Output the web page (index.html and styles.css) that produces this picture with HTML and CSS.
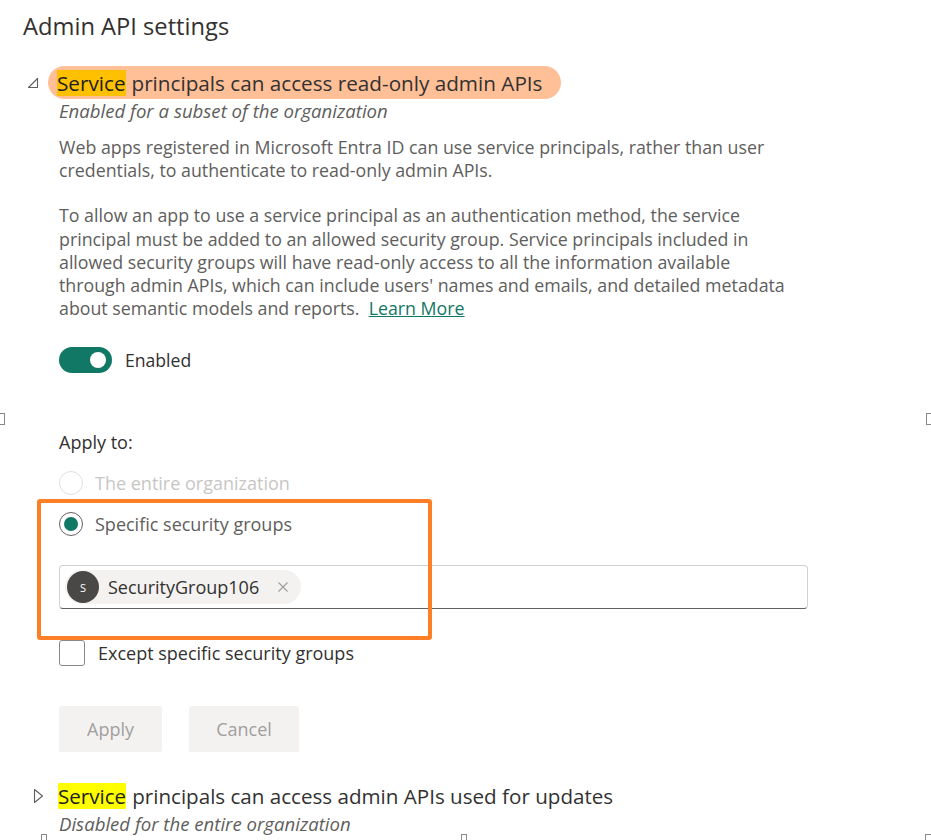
FILE: index.html
```html
<!DOCTYPE html>
<html lang="en">
<head>
<meta charset="utf-8">
<title>Admin API settings</title>
<link rel="stylesheet" href="styles.css">
</head>
<body>
<div class="page">
  <h1 class="title">Admin API settings</h1>

  <section class="setting">
    <div class="setting-head">
      <svg class="caret" width="12" height="12" viewBox="0 0 12 12"><path d="M10.5 1.5 L10.5 10.5 L1.5 10.5 Z" fill="none" stroke="#605e5c" stroke-width="1.1" stroke-linejoin="round"/></svg>
      <span class="pill"><mark class="hl hl-amber">Service</mark> principals can access read-only admin APIs</span>
    </div>
    <div class="setting-body">
      <p class="status">Enabled for a subset of the organization</p>
      <p class="desc desc-first">Web apps registered in Microsoft Entra ID can use service principals, rather than user credentials, to authenticate to read-only admin APIs.</p>
      <p class="desc desc-second">To allow an app to use a service principal as an authentication method, the service principal must be added to an allowed security group. Service principals included in allowed security groups will have read-only access to all the information available through admin APIs, which can include users' names and emails, and detailed metadata about semantic models and reports.&nbsp; <a class="link" href="#">Learn More</a></p>

      <div class="toggle-row">
        <span class="toggle"><span class="knob"></span></span>
        <span class="toggle-label">Enabled</span>
      </div>

      <div class="apply-label">Apply to:</div>

      <div class="options">
        <div class="radio-row radio-disabled">
          <span class="radio"></span>
          <span>The entire organization</span>
        </div>
        <div class="radio-row radio-checked">
          <span class="radio"><span class="dot"></span></span>
          <span>Specific security groups</span>
        </div>
        <div class="picker">
          <span class="chip">
            <span class="avatar">S</span>
            <span class="chip-text">SecurityGroup106</span>
            <svg class="chip-x" width="12" height="12" viewBox="0 0 12 12"><path d="M1.5 1.5 L10.5 10.5 M10.5 1.5 L1.5 10.5" stroke="#a19f9d" stroke-width="1.2"/></svg>
          </span>
        </div>
        <div class="annotation"></div>
      </div>

      <div class="check-row">
        <span class="checkbox"></span>
        <span>Except specific security groups</span>
      </div>

      <div class="buttons">
        <button class="btn" disabled>Apply</button>
        <button class="btn" disabled>Cancel</button>
      </div>
    </div>
  </section>

  <section class="setting setting-collapsed">
    <div class="setting-head">
      <svg class="caret caret-right" width="11" height="16" viewBox="0 0 11 16"><path d="M1.5 1.5 L9.5 8 L1.5 14.5 Z" fill="none" stroke="#605e5c" stroke-width="1.1" stroke-linejoin="round"/></svg>
      <span class="head-text"><mark class="hl hl-yellow">Service</mark> principals can access admin APIs used for updates</span>
    </div>
    <div class="setting-body">
      <p class="status">Disabled for the entire organization</p>
    </div>
  </section>

  <span class="handle handle-left"></span>
  <span class="handle handle-right"></span>
  <span class="handle handle-b1"></span>
  <span class="handle handle-b2"></span>
  <span class="handle handle-b3"></span>
</div>
</body>
</html>
```

FILE: styles.css
```css
* { box-sizing: border-box; }

html, body {
  margin: 0;
  padding: 0;
  background: #ffffff;
}

body {
  font-family: "Open Sans", "Noto Sans", sans-serif;
  color: #323130;
  font-size: 17.4px;
}

.page {
  position: relative;
  width: 931px;
  height: 840px;
  overflow: hidden;
  padding: 10px 0 0 23px;
}

.title {
  margin: 0;
  font-size: 23.7px;
  font-weight: 400;
  line-height: 32px;
  color: #323130;
}

.setting {
  margin-top: 24px;
}

.setting-head {
  display: flex;
  align-items: center;
  height: 33px;
}

.caret {
  flex: none;
  margin-left: 4px;
  margin-right: 9px;
}

.pill {
  display: inline-flex;
  align-items: center;
  height: 33px;
  padding: 0 19px 0 9px;
  border-radius: 17px;
  background: #ffbf97;
  font-size: 20.7px;
  color: #323130;
  white-space: nowrap;
}

.head-text {
  display: inline-flex;
  align-items: center;
  font-size: 20.6px;
  color: #323130;
  white-space: nowrap;
}

.hl {
  color: #201f1e;
  line-height: 26px;
  padding: 0;
  margin-right: 6px;
}

.hl-amber { background: #ffc000; }
.hl-yellow { background: #ffff00; }

.setting-body {
  padding-left: 36px;
}

.status {
  margin: 0;
  font-style: italic;
  font-size: 18.6px;
  line-height: 23px;
  color: #605e5c;
}

.desc {
  margin: 0;
  width: 733px;
  font-size: 17.8px;
  line-height: 23.2px;
  color: #605e5c;
}

.desc-first { margin-top: 14px; }
.desc-second { margin-top: 22px; }

.link {
  color: #117865;
  text-decoration: underline;
}

.toggle-row {
  display: flex;
  align-items: center;
  gap: 13px;
  margin-top: 27px;
  height: 26px;
}

.toggle {
  position: relative;
  width: 53px;
  height: 26px;
  border-radius: 13px;
  background: #117865;
}

.knob {
  position: absolute;
  right: 6px;
  top: 5px;
  width: 16px;
  height: 16px;
  border-radius: 50%;
  background: #ffffff;
}

.toggle-label {
  font-size: 17.6px;
  color: #323130;
}

.apply-label {
  margin-top: 58px;
  line-height: 23px;
  font-size: 18px;
  color: #323130;
}

.options {
  position: relative;
  margin-top: 17px;
}

.radio-row {
  display: flex;
  align-items: center;
  gap: 12px;
  height: 24px;
  font-size: 18px;
  color: #605e5c;
}

.radio-row + .radio-row { margin-top: 17px; }

.radio {
  display: flex;
  align-items: center;
  justify-content: center;
  width: 24px;
  height: 24px;
  border-radius: 50%;
  border: 1px solid #616161;
}

.radio-disabled { color: #c8c6c4; }
.radio-disabled .radio { border-color: #e1dfdd; }

.dot {
  width: 14px;
  height: 14px;
  border-radius: 50%;
  background: #117865;
}

.picker {
  display: flex;
  align-items: center;
  margin-top: 29px;
  width: 749px;
  height: 44px;
  padding-left: 5px;
  border: 1px solid #d1d1d1;
  border-bottom: 1px solid #616161;
  border-radius: 4px;
}

.chip {
  display: inline-flex;
  align-items: center;
  height: 34px;
  padding: 0 12px 0 2px;
  border-radius: 17px;
  background: #f3f2f1;
}

.avatar {
  display: flex;
  align-items: center;
  justify-content: center;
  width: 32px;
  height: 32px;
  border-radius: 50%;
  background: #4a4846;
  color: #ffffff;
  font-size: 11px;
}

.chip-text {
  margin-left: 9px;
  font-size: 18px;
  color: #323130;
}

.chip-x {
  margin-left: 18px;
}

.annotation {
  position: absolute;
  left: -22px;
  top: 28px;
  width: 395px;
  height: 141px;
  border: 4px solid #ff7f27;
  border-radius: 3px;
  pointer-events: none;
}

.check-row {
  display: flex;
  align-items: center;
  gap: 13px;
  margin-top: 31px;
  height: 26px;
  font-size: 18px;
  color: #323130;
}

.checkbox {
  width: 26px;
  height: 26px;
  border: 1px solid #8a8886;
  border-radius: 3px;
}

.buttons {
  display: flex;
  gap: 27px;
  margin-top: 40px;
}

.btn {
  height: 46px;
  border: none;
  border-radius: 2px;
  background: #f3f2f1;
  color: #a19f9d;
  font-family: inherit;
  font-size: 18px;
  padding: 0;
}

.btn:first-child { width: 103px; }
.btn:last-child { width: 110px; }

.setting-collapsed {
  margin-top: 27px;
}

.setting-collapsed .caret {
  margin-left: 10px;
  margin-right: 14px;
}

.handle {
  position: absolute;
  width: 6px;
  height: 12px;
  border: 1px solid #8a8886;
}

.handle-left { left: -1px; top: 413px; }
.handle-right { left: 926px; top: 413px; }
.handle-b1 { left: 41px; top: 834px; height: 8px; width: 6px; }
.handle-b2 { left: 461px; top: 834px; height: 8px; width: 6px; }
.handle-b3 { left: 925px; top: 834px; height: 8px; width: 8px; }
```
